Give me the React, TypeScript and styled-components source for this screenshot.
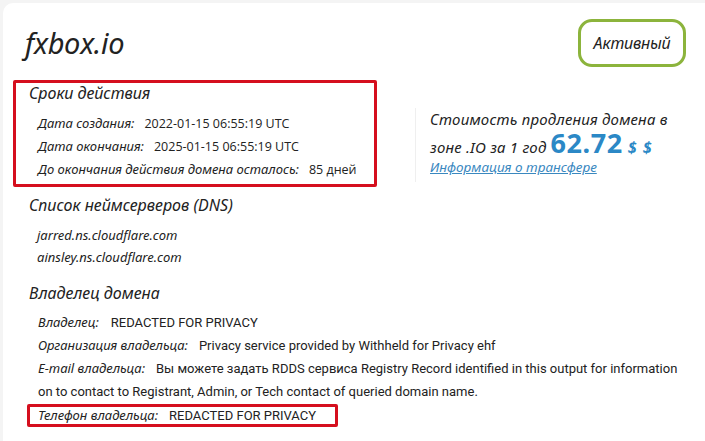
import React from "react";
import styled, { createGlobalStyle } from "styled-components";

const Global = createGlobalStyle`
  html, body { margin: 0; padding: 0; }
  body {
    background: #f4f4f4;
    font-family: "Open Sans", "Noto Sans", sans-serif;
    color: #222;
  }
`;

const Card = styled.div`
  margin: 3px 0 0 3px;
  background: #fff;
  border-radius: 10px 0 0 0;
  min-height: 438px;
  padding: 0 0 0 10px;
  box-sizing: border-box;
`;

const Header = styled.div`
  display: flex;
  justify-content: space-between;
  align-items: center;
  height: 77px;
  padding: 3px 19px 0 12px;
  box-sizing: border-box;
`;

const Title = styled.h1`
  margin: 0;
  font-family: "Noto Sans", sans-serif;
  font-style: italic;
  font-weight: 400;
  font-size: 29px;
  letter-spacing: -0.3px;
  line-height: 32px;
  color: #222;
`;

const Badge = styled.div`
  width: 108px;
  height: 48px;
  box-sizing: border-box;
  border: 3px solid #8cb43c;
  border-radius: 14px;
  display: flex;
  align-items: center;
  justify-content: center;
  font-family: "Noto Sans", sans-serif;
  font-style: italic;
  font-size: 16px;
  letter-spacing: -0.2px;
  color: #222;
`;

const Top = styled.div`
  display: flex;
  align-items: flex-start;
`;

const Highlight = styled.div`
  border: 3px solid #d50f1e;
  border-radius: 2px;
  width: 364px;
  height: 107px;
  box-sizing: border-box;
  padding: 0 0 0 13px;
`;

const SectionTitle = styled.h2<{ $mt?: number; $ml?: number }>`
  margin: ${(p) => p.$mt ?? 0}px 0 0 ${(p) => p.$ml ?? 0}px;
  font-family: "Noto Sans", sans-serif;
  font-style: italic;
  font-weight: 400;
  font-size: 16px;
  line-height: 20px;
  color: #222;
`;

const Rows = styled.div<{ $mt: number; $ml: number; $lh: number }>`
  margin: ${(p) => p.$mt}px 0 0 ${(p) => p.$ml}px;
  line-height: ${(p) => p.$lh}px;
`;

const Row = styled.div<{ $narrow?: boolean }>`
  font-size: ${(p) => (p.$narrow ? "13px" : "12.5px")};
  font-family: ${(p) => (p.$narrow ? '"Roboto", sans-serif' : '"Open Sans", sans-serif')};
  color: #222;
  white-space: ${(p) => (p.$narrow ? "normal" : "nowrap")};
`;

const Label = styled.span<{ $gap?: number }>`
  font-family: "Noto Sans", sans-serif;
  font-style: italic;
  font-size: 13px;
  margin-right: ${(p) => p.$gap ?? 10}px;
`;

const Host = styled.div`
  font-family: "Noto Sans", sans-serif;
  font-style: italic;
  font-size: 13px;
  color: #222;
`;

const Price = styled.div`
  margin: 28px 0 0 38px;
  height: 74px;
  border-left: 1px solid #efefef;
  padding-left: 14px;
  font-family: "Noto Sans", sans-serif;
  font-style: italic;
  font-size: 15px;
  letter-spacing: 0.2px;
  color: #222;
  line-height: 23px;
`;

const PriceLine = styled.div`
  display: flex;
  align-items: baseline;
  height: 24px;
  line-height: 24px;
`;

const Amount = styled.span`
  font-family: "Noto Sans", sans-serif;
  font-style: normal;
  font-weight: 700;
  font-size: 27px;
  line-height: 24px;
  color: #2b88c6;
  margin-left: 4px;
  letter-spacing: 0.6px;
`;

const Currency = styled.span`
  font-weight: 700;
  font-size: 16px;
  color: #2b88c6;
  margin-left: 5px;
  letter-spacing: 1px;
`;

const Link = styled.a`
  display: block;
  margin-top: 1px;
  color: #3a88bf;
  text-decoration: underline;
  font-size: 13.5px;
  letter-spacing: 0;
`;

const PhoneBox = styled.div`
  display: inline-block;
  border: 3px solid #d50f1e;
  border-radius: 2px;
  margin-left: -11px;
  padding: 0 19px 0 8px;
  line-height: 17px;
`;

const OwnerRows = styled.div`
  margin: 8px 0 0 25px;
  line-height: 23px;
  width: 645px;
`;

export default function App() {
  return (
    <>
      <Global />
      <Card>
        <Header>
          <Title>fxbox.io</Title>
          <Badge>Активный</Badge>
        </Header>
        <Top>
          <Highlight>
            <SectionTitle>Сроки действия</SectionTitle>
            <Rows $mt={9} $ml={9} $lh={23}>
              <Row>
                <Label>Дата создания:</Label>2022-01-15 06:55:19 UTC
              </Row>
              <Row>
                <Label>Дата окончания:</Label>2025-01-15 06:55:19 UTC
              </Row>
              <Row>
                <Label>До окончания действия домена осталось:</Label>85 дней
              </Row>
            </Rows>
          </Highlight>
          <Price>
            <div>Стоимость продления домена в</div>
            <PriceLine>
              зоне .IO за 1 год<Amount>62.72</Amount>
              <Currency>$ $</Currency>
            </PriceLine>
            <Link href="#">Информация о трансфере</Link>
          </Price>
        </Top>
        <SectionTitle $mt={8} $ml={16}>
          Список неймсерверов (DNS)
        </SectionTitle>
        <Rows $mt={9} $ml={24} $lh={22}>
          <Host>jarred.ns.cloudflare.com</Host>
          <Host>ainsley.ns.cloudflare.com</Host>
        </Rows>
        <SectionTitle $mt={15} $ml={16}>
          Владелец домена
        </SectionTitle>
        <OwnerRows>
          <Row $narrow>
            <Label $gap={12}>Владелец:</Label>REDACTED FOR PRIVACY
          </Row>
          <Row $narrow>
            <Label $gap={11}>Организация владельца:</Label>Privacy service provided by Withheld for Privacy ehf
          </Row>
          <Row $narrow>
            <Label $gap={11}>E-mail владельца:</Label>Вы можете задать RDDS сервиса Registry Record identified in
            this output for information on to contact to Registrant, Admin, or Tech contact of queried domain name.
          </Row>
          <PhoneBox>
            <Row $narrow>
              <Label $gap={11}>Телефон владельца:</Label>REDACTED FOR PRIVACY
            </Row>
          </PhoneBox>
        </OwnerRows>
      </Card>
    </>
  );
}
